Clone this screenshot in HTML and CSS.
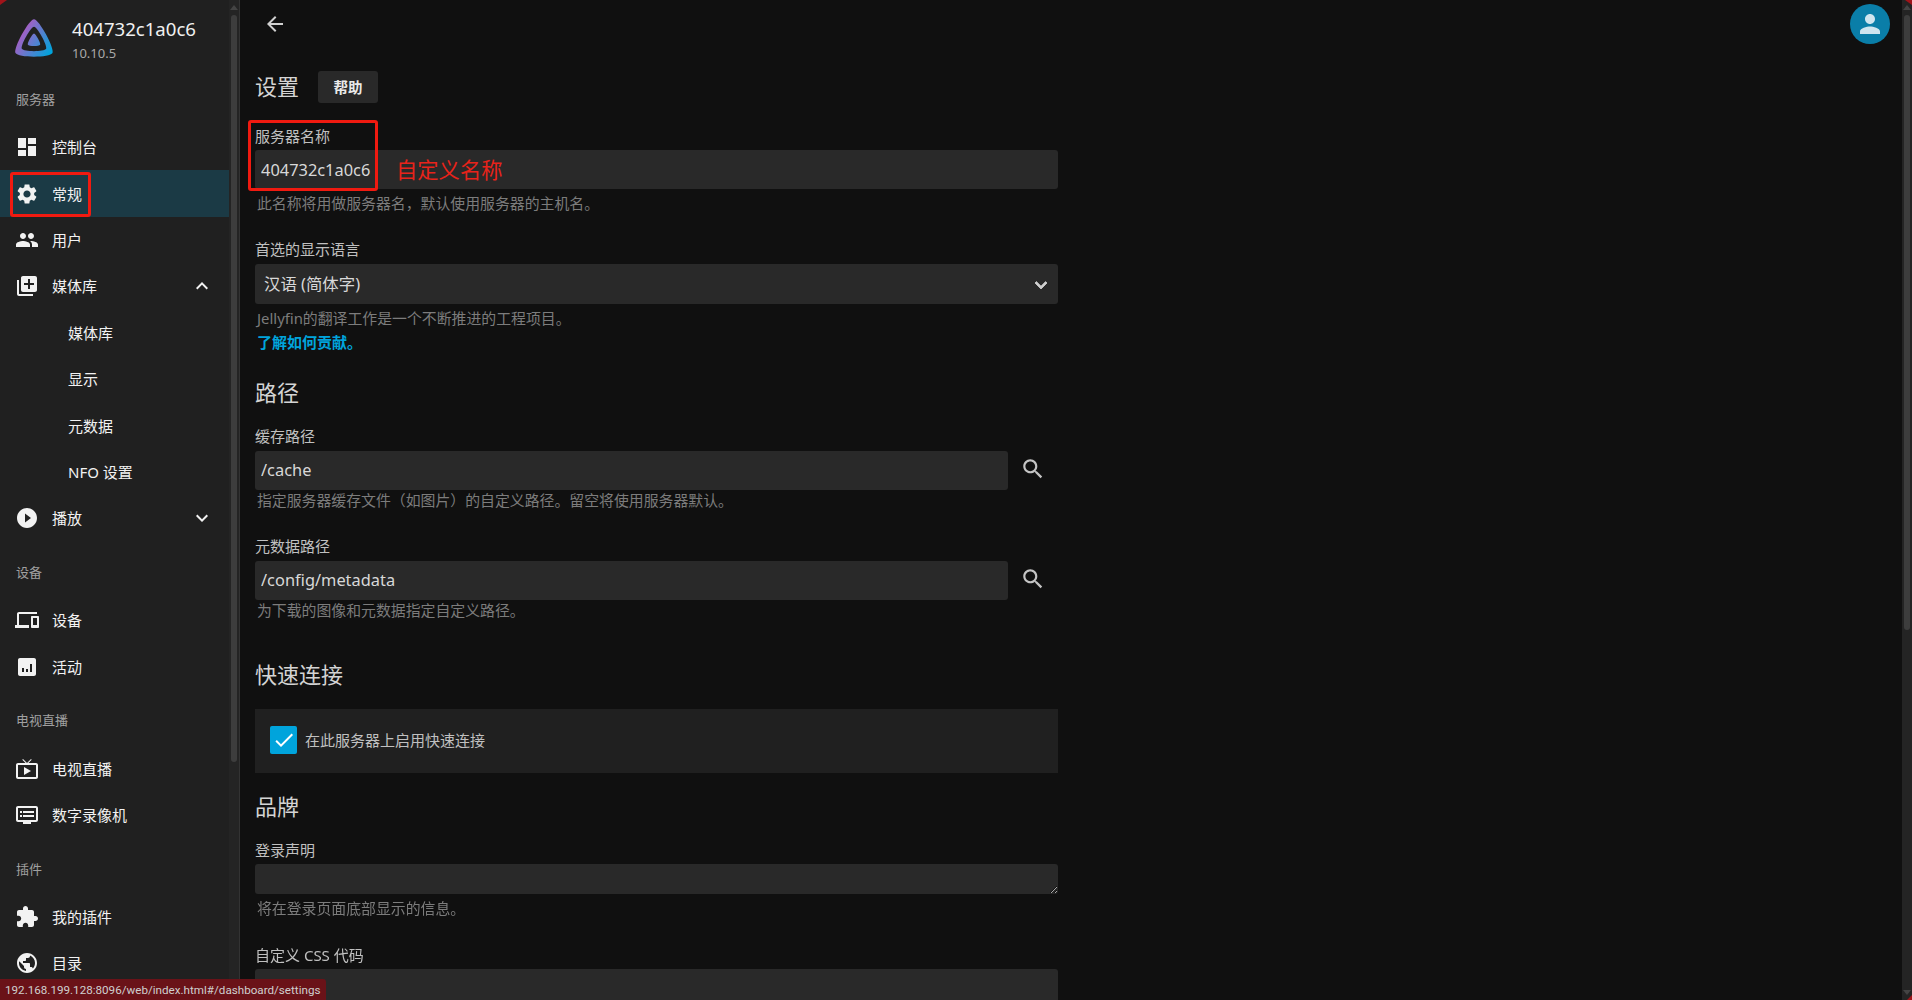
FILE: index.html
```html
<!DOCTYPE html>
<html lang="zh-CN">
<head>
    <meta charset="UTF-8">
    <meta name="viewport" content="width=device-width, initial-scale=1.0">
    <title>设置</title>
    <link rel="stylesheet" href="styles.css">
</head>
<body>
    <svg class="defs" width="0" height="0">
        <defs>
            <linearGradient id="logo-grad" gradientUnits="userSpaceOnUse" x1="110" y1="200" x2="440" y2="400">
                <stop offset="0" stop-color="#aa5cc3"/>
                <stop offset="1" stop-color="#00a4dc"/>
            </linearGradient>
        </defs>
    </svg>

    <div class="app">
        <aside class="sidebar">
            <div class="sidebar-content">
                <div class="brand">
                    <svg class="logo" viewBox="0 0 512 512"><path fill="url(#logo-grad)" d="M190.56 329.07c8.63 17.3 122.4 17.12 130.93 0 8.52-17.1-47.9-119.78-65.46-119.8-17.57 0-74.1 102.5-65.47 119.8zM58.75 417.03c25.97 52.15 368.86 51.55 394.55 0S308.93 56.08 256.03 56.08c-52.92 0-223.25 308.8-197.28 360.95zm68.04-45.25c-17.02-34.17 94.6-236.5 129.26-236.5 34.67 0 146.1 202.7 129.26 236.5-16.83 33.8-241.5 34.17-258.52 0z"/></svg>
                    <div class="brand-text">
                        <div class="brand-name">404732c1a0c6</div>
                        <div class="brand-version">10.10.5</div>
                    </div>
                </div>

                <div class="nav-title">服务器</div>
                <a class="nav-item"><svg class="icon" viewBox="0 0 24 24"><path d="M3 13h8V3H3v10zm0 8h8v-6H3v6zm10 0h8V11h-8v10zm0-18v6h8V3h-8z"/></svg>控制台</a>
                <a class="nav-item active"><svg class="icon" viewBox="0 0 24 24"><path d="M19.14 12.94c.04-.3.06-.61.06-.94 0-.32-.02-.64-.07-.94l2.03-1.58c.18-.14.23-.41.12-.61l-1.92-3.32c-.12-.22-.37-.29-.59-.22l-2.39.96c-.5-.38-1.03-.7-1.62-.94l-.36-2.54c-.04-.24-.24-.41-.48-.41h-3.84c-.24 0-.43.17-.47.41l-.36 2.54c-.59.24-1.13.57-1.62.94l-2.39-.96c-.22-.08-.47 0-.59.22L2.74 8.87c-.12.21-.08.47.12.61l2.03 1.58c-.05.3-.09.63-.09.94s.02.64.07.94l-2.03 1.58c-.18.14-.23.41-.12.61l1.92 3.32c.12.22.37.29.59.22l2.39-.96c.5.38 1.03.7 1.62.94l.36 2.54c.05.24.24.41.48.41h3.84c.24 0 .44-.17.47-.41l.36-2.54c.59-.24 1.13-.56 1.62-.94l2.39.96c.22.08.47 0 .59-.22l1.92-3.32c.12-.22.07-.47-.12-.61l-2.01-1.58zM12 15.6c-1.98 0-3.6-1.62-3.6-3.6s1.62-3.6 3.6-3.6 3.6 1.62 3.6 3.6-1.62 3.6-3.6 3.6z"/></svg>常规</a>
                <a class="nav-item"><svg class="icon" viewBox="0 0 24 24"><path d="M16 11c1.66 0 2.99-1.34 2.99-3S17.66 5 16 5c-1.66 0-3 1.34-3 3s1.34 3 3 3zm-8 0c1.66 0 2.99-1.34 2.99-3S9.66 5 8 5C6.34 5 5 6.34 5 8s1.34 3 3 3zm0 2c-2.33 0-7 1.17-7 3.5V19h14v-2.5c0-2.33-4.67-3.5-7-3.5zm8 0c-.29 0-.62.02-.97.05 1.16.84 1.97 1.97 1.97 3.45V19h6v-2.5c0-2.33-4.67-3.5-7-3.5z"/></svg>用户</a>
                <a class="nav-item"><svg class="icon" viewBox="0 0 24 24"><path d="M4 6H2v14c0 1.1.9 2 2 2h14v-2H4V6zm16-4H8c-1.1 0-2 .9-2 2v12c0 1.1.9 2 2 2h12c1.1 0 2-.9 2-2V4c0-1.1-.9-2-2-2zm-1 9h-4v4h-2v-4H9V9h4V5h2v4h4v2z"/></svg>媒体库<svg class="icon expand" viewBox="0 0 24 24"><path d="M12 8l-6 6 1.41 1.41L12 10.83l4.59 4.58L18 14z"/></svg></a>
                <a class="nav-item sub">媒体库</a>
                <a class="nav-item sub">显示</a>
                <a class="nav-item sub">元数据</a>
                <a class="nav-item sub">NFO 设置</a>
                <a class="nav-item"><svg class="icon" viewBox="0 0 24 24"><path d="M12 2C6.48 2 2 6.48 2 12s4.48 10 10 10 10-4.48 10-10S17.52 2 12 2zm-2 14.5v-9l6 4.5-6 4.5z"/></svg>播放<svg class="icon expand" viewBox="0 0 24 24"><path d="M16.59 8.59L12 13.17 7.41 8.59 6 10l6 6 6-6z"/></svg></a>

                <div class="nav-title">设备</div>
                <a class="nav-item"><svg class="icon" viewBox="0 0 24 24"><path d="M4 6h18V4H4c-1.1 0-2 .9-2 2v11H0v3h14v-3H4V6zm19 2h-6c-.55 0-1 .45-1 1v10c0 .55.45 1 1 1h6c.55 0 1-.45 1-1V9c0-.55-.45-1-1-1zm-1 9h-4v-7h4v7z"/></svg>设备</a>
                <a class="nav-item"><svg class="icon" viewBox="0 0 24 24"><path d="M19 3H5c-1.1 0-2 .9-2 2v14c0 1.1.9 2 2 2h14c1.1 0 2-.9 2-2V5c0-1.1-.9-2-2-2zM9 17H7v-4h2v4zm4 0h-2v-3h2v3zm4 0h-2V9h2v8z"/></svg>活动</a>

                <div class="nav-title">电视直播</div>
                <a class="nav-item"><svg class="icon" viewBox="0 0 24 24"><path d="M21 6h-7.59l3.29-3.29L16 2l-4 4-4-4-.71.71L10.59 6H3c-1.1 0-2 .89-2 2v12c0 1.1.9 2 2 2h18c1.1 0 2-.9 2-2V8c0-1.11-.9-2-2-2zm0 14H3V8h18v12zM9 10v8l7-4z"/></svg>电视直播</a>
                <a class="nav-item"><svg class="icon" viewBox="0 0 24 24"><path d="M21 3H3c-1.1 0-2 .9-2 2v12c0 1.1.9 2 2 2h5v2h8v-2h5c1.1 0 1.99-.9 1.99-2L23 5c0-1.1-.9-2-2-2zm0 14H3V5h18v12zm-2-9H8v2h11V8zm0 4H8v2h11v-2zM7 8H5v2h2V8zm0 4H5v2h2v-2z"/></svg>数字录像机</a>

                <div class="nav-title">插件</div>
                <a class="nav-item"><svg class="icon" viewBox="0 0 24 24"><path d="M20.5 11H19V7c0-1.1-.9-2-2-2h-4V3.5C13 2.12 11.88 1 10.5 1S8 2.12 8 3.5V5H4c-1.1 0-1.99.9-1.99 2v3.8H3.5c1.49 0 2.7 1.21 2.7 2.7s-1.21 2.7-2.7 2.7H2V20c0 1.1.9 2 2 2h3.8v-1.5c0-1.49 1.21-2.7 2.7-2.7 1.49 0 2.7 1.21 2.7 2.7V22H17c1.1 0 2-.9 2-2v-4h1.5c1.38 0 2.5-1.12 2.5-2.5S21.88 11 20.5 11z"/></svg>我的插件</a>
                <a class="nav-item"><svg class="icon" viewBox="0 0 24 24"><path d="M12 2C6.48 2 2 6.48 2 12s4.48 10 10 10 10-4.48 10-10S17.52 2 12 2zm-1 17.93c-3.95-.49-7-3.85-7-7.93 0-.62.08-1.21.21-1.79L9 15v1c0 1.1.9 2 2 2v1.93zm6.9-2.54c-.26-.81-1-1.39-1.9-1.39h-1v-3c0-.55-.45-1-1-1H8v-2h2c.55 0 1-.45 1-1V7h2c1.1 0 2-.9 2-2v-.41c2.93 1.19 5 4.06 5 7.41 0 2.08-.8 3.97-2.1 5.39z"/></svg>目录</a>
            </div>
            <div class="scrollbar side-bar"><div class="arrow-up"></div><div class="thumb"></div></div>
        </aside>

        <main class="main">
            <div class="topbar">
                <svg class="icon back" viewBox="0 0 24 24"><path d="M20 11H7.83l5.59-5.59L12 4l-8 8 8 8 1.41-1.41L7.83 13H20v-2z"/></svg>
                <div class="avatar"><svg viewBox="0 0 24 24"><path d="M12 12c2.21 0 4-1.79 4-4s-1.79-4-4-4-4 1.79-4 4 1.79 4 4 4zm0 2c-2.67 0-8 1.34-8 4v2h16v-2c0-2.66-5.33-4-8-4z"/></svg></div>
            </div>

            <form class="settings">
                <div class="title-row">
                    <h1>设置</h1>
                    <button type="button" class="help-btn">帮助</button>
                </div>

                <label class="label first">服务器名称</label>
                <input class="text-input" type="text" value="404732c1a0c6">
                <div class="hint gap-name">此名称将用做服务器名，默认使用服务器的主机名。</div>

                <label class="label lang">首选的显示语言</label>
                <div class="select-wrap">
                    <select class="select"><option>汉语 (简体字)</option></select>
                    <svg class="icon select-arrow" viewBox="0 0 24 24"><path d="M16.59 8.59L12 13.17 7.41 8.59 6 10l6 6 6-6z"/></svg>
                </div>
                <div class="hint gap-lang">Jellyfin的翻译工作是一个不断推进的工程项目。</div>
                <a class="hint-link">了解如何贡献。</a>

                <h2 class="path-title">路径</h2>
                <label class="label">缓存路径</label>
                <div class="path-row">
                    <input class="text-input" type="text" value="/cache">
                    <svg class="icon search" viewBox="0 0 24 24"><path d="M15.5 14h-.79l-.28-.27C15.41 12.59 16 11.11 16 9.5 16 5.91 13.09 3 9.5 3S3 5.91 3 9.5 5.91 16 9.5 16c1.61 0 3.09-.59 4.23-1.57l.27.28v.79l5 4.99L20.49 19l-4.99-5zm-6 0C7.01 14 5 11.99 5 9.5S7.01 5 9.5 5 14 7.01 14 9.5 11.99 14 9.5 14z"/></svg>
                </div>
                <div class="hint gap-path">指定服务器缓存文件（如图片）的自定义路径。留空将使用服务器默认。</div>

                <label class="label meta">元数据路径</label>
                <div class="path-row">
                    <input class="text-input" type="text" value="/config/metadata">
                    <svg class="icon search" viewBox="0 0 24 24"><path d="M15.5 14h-.79l-.28-.27C15.41 12.59 16 11.11 16 9.5 16 5.91 13.09 3 9.5 3S3 5.91 3 9.5 5.91 16 9.5 16c1.61 0 3.09-.59 4.23-1.57l.27.28v.79l5 4.99L20.49 19l-4.99-5zm-6 0C7.01 14 5 11.99 5 9.5S7.01 5 9.5 5 14 7.01 14 9.5 11.99 14 9.5 14z"/></svg>
                </div>
                <div class="hint gap-path">为下载的图像和元数据指定自定义路径。</div>

                <h2 class="quick-title">快速连接</h2>
                <div class="check-panel">
                    <span class="checkbox"><svg viewBox="0 0 24 24"><path d="M9 16.17L4.83 12l-1.42 1.41L9 19 21 7l-1.41-1.41z"/></svg></span>
                    <span class="check-text">在此服务器上启用快速连接</span>
                </div>

                <h2 class="brand-title">品牌</h2>
                <label class="label tight">登录声明</label>
                <textarea class="text-area"></textarea>
                <div class="hint gap-name">将在登录页面底部显示的信息。</div>
                <label class="label css">自定义 CSS 代码</label>
                <textarea class="text-area tall"></textarea>
            </form>
        </main>
        <div class="scrollbar page-bar"><div class="arrow-up"></div><div class="thumb"></div><div class="arrow-down"></div></div>
    </div>

    <!-- marcas rojas de la captura -->
    <div class="mark mark-name"></div>
    <div class="mark mark-nav"></div>
    <div class="mark-text">自定义名称</div>

    <div class="status">192.168.199.128:8096/web/index.html#/dashboard/settings</div>
    <div class="corner corner-tl"></div>
    <div class="corner corner-tr"></div>
    <div class="corner corner-br"></div>
</body>
</html>
```
FILE: styles.css
```css
* {
    box-sizing: border-box;
}
html, body {
    height: 100%;
}
body {
    margin: 0;
    overflow: hidden;
    background: #101010;
    color: #c8c8c8;
    font-family: "Noto Sans", "Noto Sans CJK SC", sans-serif;
    font-size: 15px;
}
.defs {
    position: absolute;
}
.app {
    display: flex;
    height: 1000px;
}
.icon {
    width: 24px;
    height: 24px;
    flex: none;
    fill: currentColor;
}

/* sidebar */
.sidebar {
    width: 240px;
    flex: none;
    display: flex;
    background: #202020;
    border-right: 1px solid #333;
    overflow: hidden;
}
.sidebar-content {
    width: 229px;
    flex: none;
}
.brand {
    height: 68.4px;
    display: flex;
    padding: 14px 0 0 10px;
}
.logo {
    width: 48px;
    height: 48px;
    flex: none;
}
.brand-text {
    margin: 1px 0 0 14px;
}
.brand-name {
    font-size: 18.6px;
    line-height: 28px;
    color: #f0f0f0;
}
.brand-version {
    margin-top: 1px;
    font-size: 13px;
    line-height: 18px;
    color: #a8a8a8;
}
.nav-title {
    height: 20px;
    margin: 21.6px 0 14px 16px;
    font-size: 13px;
    line-height: 18px;
    color: #a0a0a0;
}
.nav-item {
    height: 46.4px;
    display: flex;
    align-items: center;
    padding: 0 0 1px 15px;
    color: #f2f2f2;
}
.nav-item .icon {
    margin-top: 1px;
}
.nav-item .icon:first-child {
    margin-right: 13px;
}
.nav-item.active {
    background: #1b3a45;
}
.nav-item.sub {
    padding-left: 68px;
}
.nav-item .expand {
    margin-left: auto;
    margin-right: 15px;
}

/* fake scrollbars */
.scrollbar {
    position: relative;
    width: 10px;
    flex: none;
    background: #242424;
}
.thumb {
    position: absolute;
    top: 15px;
    left: 2px;
    width: 6px;
    border-radius: 3px;
    background: #3d3d3d;
}
.side-bar .thumb {
    height: 747px;
}
.page-bar .thumb {
    height: 615px;
}
.arrow-up, .arrow-down {
    position: absolute;
    left: 1px;
    width: 8px;
    height: 5px;
    background: #444;
}
.arrow-up {
    top: 5px;
    clip-path: polygon(50% 0, 100% 100%, 0 100%);
}
.arrow-down {
    bottom: 5px;
    clip-path: polygon(0 0, 100% 0, 50% 100%);
}

/* main */
.main {
    flex: 1;
    min-width: 0;
    overflow: hidden;
}
.topbar {
    height: 48px;
    display: flex;
    align-items: center;
    justify-content: space-between;
    padding: 0 12px 0 23px;
}
.back {
    color: #d0d0d0;
}
.avatar {
    width: 40px;
    height: 40px;
    border-radius: 50%;
    background: #0a7ea8;
    display: flex;
    align-items: center;
    justify-content: center;
}
.avatar svg {
    width: 30px;
    height: 30px;
    fill: #cfe5ef;
}
.settings {
    width: 803px;
    margin-left: 15px;
}
.title-row {
    display: flex;
    align-items: center;
    height: 32px;
    margin-top: 23px;
}
h1, h2 {
    height: 30px;
    margin: 0;
    font-weight: 400;
    font-size: 22px;
    line-height: 28px;
    color: #d4d4d4;
}
.help-btn {
    width: 60px;
    height: 32px;
    margin-left: 19px;
    padding: 0 0 2px;
    border: none;
    border-radius: 3px;
    background: #292929;
    color: #eaeaea;
    font: 700 14.5px "Noto Sans", "Noto Sans CJK SC", sans-serif;
}
.label {
    display: block;
    height: 20px;
    margin: 19px 0 4px;
    line-height: 19px;
    color: #c0c0c0;
}
.label.first {
    margin: 24px 0 3px;
}
.label.lang {
    margin-top: 26px;
}
.label.meta {
    margin-top: 26px;
}
.label.tight {
    margin-bottom: 3px;
}
.label.css {
    margin: 27px 0 3px;
}
.text-input, .text-area, .select {
    display: block;
    width: 100%;
    border: none;
    border-radius: 3px;
    background: #292929;
    color: #d8d8d8;
    font-family: "Noto Sans", "Noto Sans CJK SC", sans-serif;
    font-size: 16.4px;
    outline: none;
}
.text-input {
    height: 39px;
    padding: 0 6px;
}
.select-wrap {
    position: relative;
}
.select {
    height: 40px;
    padding: 0 9px 2px;
    appearance: none;
}
.select-arrow {
    position: absolute;
    right: 5px;
    top: 9px;
    color: #d0d0d0;
    stroke: currentColor;
    stroke-width: 0.8;
}
.hint {
    height: 20px;
    margin-left: 2px;
    font-size: 14.88px;
    line-height: 18px;
    color: #7c7c7c;
}
.gap-name {
    margin-top: 5px;
}
.gap-lang {
    margin-top: 5px;
}
.gap-path {
    margin-top: 1px;
}
.hint-link {
    display: block;
    height: 20px;
    margin: 4px 0 0 2px;
    font-size: 15px;
    font-weight: 700;
    line-height: 18px;
    color: #00a4dc;
}
.path-title {
    margin-top: 25px;
}
.path-row {
    display: flex;
    align-items: flex-start;
}
.path-row .text-input {
    width: 753px;
    padding-bottom: 2px;
}
.search {
    width: 26px;
    height: 26px;
    margin: 5px 0 0 12px;
    color: #c4c4c4;
}
.quick-title {
    margin-top: 39px;
}
.check-panel {
    display: flex;
    align-items: center;
    height: 64px;
    margin-top: 19px;
    padding: 0 0 2px 15px;
    background: #202020;
    color: #c0c0c0;
}
.checkbox {
    width: 27px;
    height: 28px;
    margin-right: 8px;
    border-radius: 2px;
    background: #00a4dc;
    display: flex;
    align-items: center;
    justify-content: center;
}
.checkbox svg {
    width: 24px;
    height: 24px;
    fill: #fff;
}
.check-text {
    margin-bottom: 2px;
}
.brand-title {
    margin-top: 19px;
}
.text-area {
    height: 30px;
    padding: 4px 6px;
}
.text-area.tall {
    height: 40px;
}

/* overlays */
.mark {
    position: absolute;
    border: 3px solid #f01a10;
    border-radius: 3px;
}
.mark-name {
    left: 248px;
    top: 120px;
    width: 130px;
    height: 71px;
}
.mark-nav {
    left: 10px;
    top: 172px;
    width: 81px;
    height: 45px;
}
.mark-text {
    position: absolute;
    left: 396px;
    top: 155px;
    font-size: 21.3px;
    line-height: 30px;
    color: #e8231a;
}
.status {
    position: absolute;
    left: 0;
    bottom: 0;
    width: 326px;
    height: 21px;
    padding-left: 5px;
    border-top-right-radius: 3px;
    background: #6a1218;
    color: #cfcfcf;
    font-family: Roboto, sans-serif;
    font-size: 11.65px;
    line-height: 22px;
    white-space: nowrap;
}
.corner {
    position: absolute;
    background: #a0141a;
}
.corner-tl {
    left: 0;
    top: 0;
    width: 7px;
    height: 5px;
    clip-path: polygon(0 0, 100% 0, 0 100%);
}
.corner-tr {
    right: 0;
    top: 0;
    width: 7px;
    height: 5px;
    clip-path: polygon(0 0, 100% 0, 100% 100%);
}
.corner-br {
    right: 0;
    bottom: 0;
    width: 5px;
    height: 5px;
    clip-path: polygon(100% 0, 100% 100%, 0 100%);
}
```
